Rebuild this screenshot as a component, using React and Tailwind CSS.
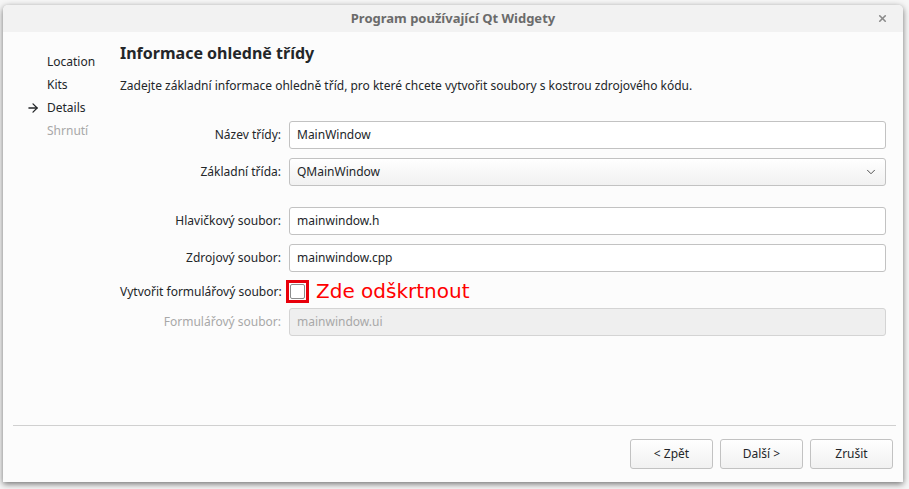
import { ArrowRight, ChevronDown, X } from "lucide-react";

const font = { fontFamily: '"Noto Sans", "Open Sans", sans-serif' };

function Field({ label, value, disabled, top }) {
  return (
    <div className={`flex items-center h-[28px] ${top}`}>
      <div className={`w-[169px] shrink-0 pr-[8px] text-right whitespace-nowrap ${disabled ? "text-[#a8a8a8]" : "text-[#232629]"}`}>{label}</div>
      <div
        className={`flex-1 h-[28px] flex items-center px-[7px] rounded-[3px] border ${
          disabled ? "bg-[#efefef] border-[#d4d4d4] text-[#a8a8a8]" : "bg-white border-[#c2c2c2] text-[#232629]"
        }`}
      >
        {value}
      </div>
    </div>
  );
}

function Btn({ children }) {
  return (
    <button className="w-[83px] h-[30px] rounded-[3px] border border-[#c2c2c2] bg-gradient-to-b from-white to-[#f1f1f1] text-[12px] text-[#232629]">
      {children}
    </button>
  );
}

export default function App() {
  return (
    <div className="w-[909px] h-[489px] bg-[#f6f6f6] pt-[5px] pl-[3px] overflow-hidden" style={font}>
      <div className="w-[900px] h-[477px] rounded-t-[5px] bg-[#fcfcfc] shadow-[0_2px_6px_rgba(0,0,0,0.55)] flex flex-col">
        <div className="relative h-[27px] rounded-t-[5px] bg-[#f2f2f2] flex items-center justify-center">
          <span className="text-[13px] font-bold text-[#6b6b6b]">Program používající Qt Widgety</span>
          <X className="absolute right-[15px] top-[8px] text-[#8a8a8a]" size={11} strokeWidth={3.5} />
        </div>

        <div className="flex-1 flex text-[12px]">
          <div className="w-[117px] shrink-0 pt-[18px] text-[#232629]">
            <div className="h-[23px] flex items-center pl-[44px]">Location</div>
            <div className="h-[23px] flex items-center pl-[44px]">Kits</div>
            <div className="h-[23px] flex items-center pl-[23px]">
              <ArrowRight size={14} strokeWidth={2.2} className="mr-[7px]" />
              Details
            </div>
            <div className="h-[23px] flex items-center pl-[44px] text-[#a8a8a8]">Shrnutí</div>
          </div>

          <div className="flex-1 pr-[17px]">
            <h1 className="mt-[9px] h-[24px] leading-[24px] text-[16px] font-bold text-[#232629]">Informace ohledně třídy</h1>
            <p className="mt-[12px] h-[18px] leading-[18px] text-[#232629]">
              Zadejte základní informace ohledně tříd, pro které chcete vytvořit soubory s kostrou zdrojového kódu.
            </p>

            <Field top="mt-[26px]" label="Název třídy:" value="MainWindow" />

            <div className="flex items-center h-[28px] mt-[9px]">
              <div className="w-[169px] shrink-0 pr-[8px] text-right text-[#232629]">Základní třída:</div>
              <div className="flex-1 h-[28px] flex items-center justify-between px-[7px] rounded-[3px] border border-[#c2c2c2] bg-gradient-to-b from-white to-[#f1f1f1] text-[#232629]">
                <span>QMainWindow</span>
                <ChevronDown size={14} strokeWidth={1.6} className="text-[#444]" />
              </div>
            </div>

            <Field top="mt-[21px]" label="Hlavičkový soubor:" value="mainwindow.h" />
            <Field top="mt-[9px]" label="Zdrojový soubor:" value="mainwindow.cpp" />

            <div className="flex items-center h-[23px] mt-[8px]">
              <div className="w-[169px] shrink-0 pr-[8px] text-right whitespace-nowrap text-[#232629]">Vytvořit formulářový soubor:</div>
              <div className="-ml-[3px] w-[23px] h-[23px] border-[3px] border-[#e8000b] flex items-center justify-center">
                <div className="w-[15px] h-[15px] rounded-[2px] border border-[#8c8c8c] bg-white" />
              </div>
              <span
                className="ml-[7px] text-[20px] leading-[23px] text-[#ff0000]"
                style={{ fontFamily: '"DejaVu Sans", sans-serif' }}
              >
                Zde odškrtnout
              </span>
            </div>

            <Field top="mt-[5px]" label="Formulářový soubor:" value="mainwindow.ui" disabled />
          </div>
        </div>

        <div className="ml-[10px] mr-[7px] border-t border-[#d0d0d0]" />
        <div className="flex justify-end gap-[7px] pr-[10px] pt-[13px] pb-[13px]">
          <Btn>&lt; Zpět</Btn>
          <Btn>Další &gt;</Btn>
          <Btn>Zrušit</Btn>
        </div>
      </div>
    </div>
  );
}
